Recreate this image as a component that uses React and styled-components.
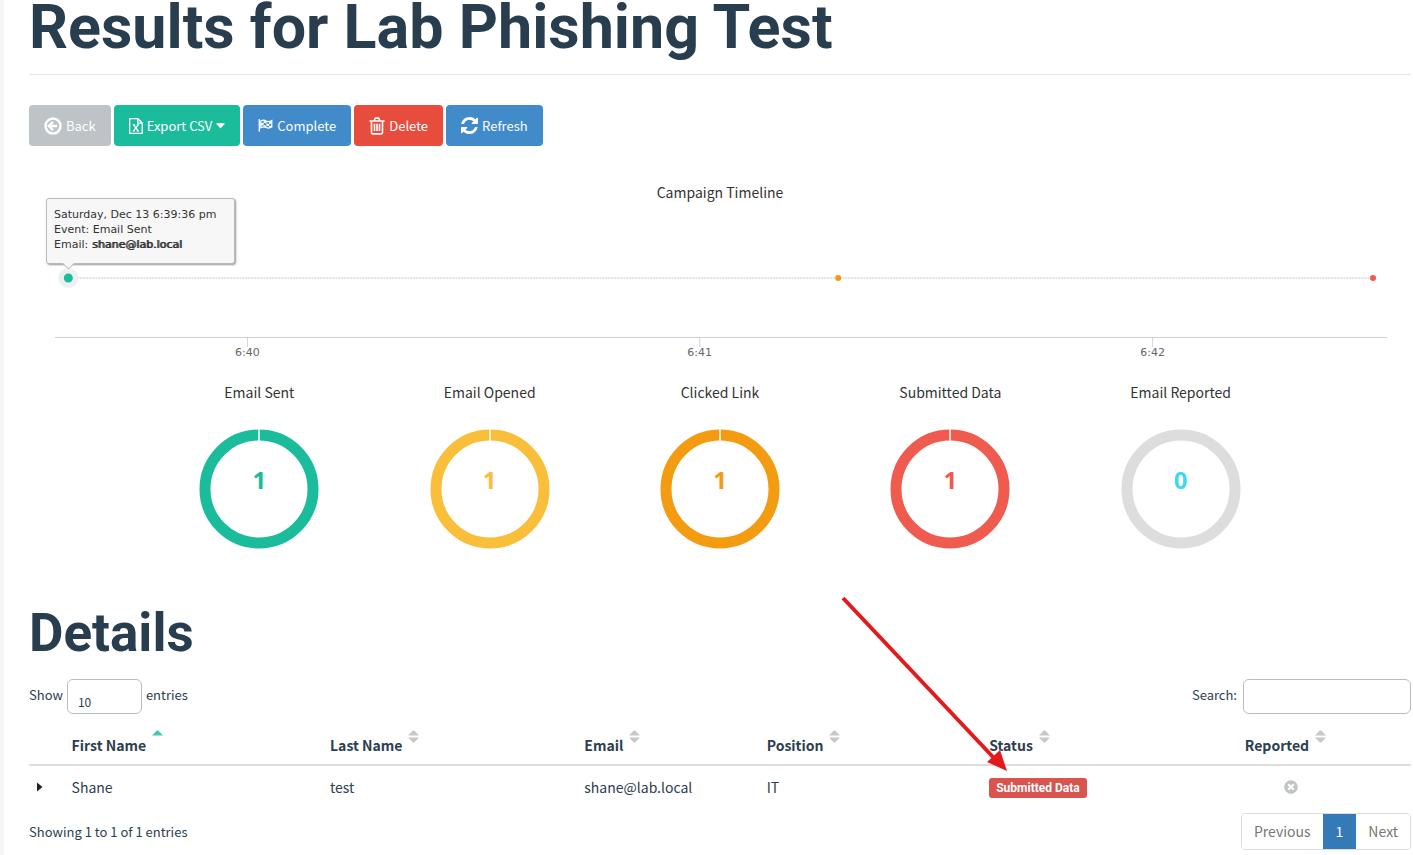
import styled, { createGlobalStyle, css } from "styled-components";
import { FaTimesCircle } from "react-icons/fa";

const GlobalStyle = createGlobalStyle`
  * {
    box-sizing: border-box;
  }
  body {
    margin: 0;
    background: #fff;
    color: #2c3e50;
    font-family: "Noto Sans CJK JP", "Open Sans", sans-serif;
    font-size: 14px;
    line-height: 20px;
  }
`;

const Page = styled.main`
  min-height: 100vh;
  border-left: 4px solid #f5f5f5;
  padding: 0 2px 4px 25px;
`;

const Title = styled.h1`
  margin: 0;
  padding-bottom: 20px;
  border-bottom: 1px solid #e6e6e6;
  color: #283e4f;
  font-family: Roboto, sans-serif;
  font-size: 61px;
  font-weight: 700;
  line-height: 54px;
`;

const Toolbar = styled.div`
  display: flex;
  gap: 3px;
  margin-top: 30px;
`;

const Button = styled.button`
  display: flex;
  align-items: center;
  gap: 4px;
  height: 41px;
  padding: 0 15px;
  border: 0;
  border-radius: 4px;
  background: ${({ $color }) => $color};
  color: #fff;
  font-family: inherit;
  font-size: 13px;
  line-height: 20px;
  white-space: nowrap;
`;

const ChartTitle = styled.h2`
  margin: 0;
  padding-bottom: 2px;
  color: #333;
  font-size: 14px;
  font-weight: 400;
  line-height: 18px;
  text-align: center;
`;

const Timeline = styled.section`
  position: relative;
  margin-top: 37px;
`;

const Plot = styled.svg`
  display: block;
  width: 100%;
  height: 160px;
  overflow: visible;
  text {
    fill: #666;
    font-family: "DejaVu Sans", sans-serif;
    font-size: 11px;
    text-anchor: middle;
  }
`;

const PlotArea = styled.div`
  padding: 0 24px 0 26px;
`;

const Tooltip = styled.div`
  position: absolute;
  top: 15px;
  left: 17px;
  width: 189px;
  height: 66px;
  padding: 8px 7px;
  border: 1px solid #b9b9b9;
  border-radius: 3px;
  background: #f7f7f7;
  box-shadow: 1px 1px 2px rgba(0, 0, 0, 0.4);
  color: #333;
  font-family: "DejaVu Sans", sans-serif;
  font-size: 11px;
  line-height: 15px;
  white-space: nowrap;
  b {
    font-weight: 400;
    text-shadow: 1px 0 #333;
  }
  svg {
    position: absolute;
    top: 100%;
    left: 15px;
    margin-top: -1px;
  }
`;

const Donuts = styled.section`
  display: grid;
  grid-template-columns: repeat(12, 1fr);
  margin-top: 20px;
`;

const Donut = styled.div`
  position: relative;
  grid-column: span 2;
  &:first-child {
    grid-column: 2 / span 2;
  }
  svg {
    display: block;
    margin: 26px auto 0;
  }
`;

const Count = styled.span`
  position: absolute;
  top: 83px;
  left: 0;
  width: 100%;
  color: ${({ $color }) => $color};
  font-family: "Open Sans", sans-serif;
  font-size: 24px;
  font-weight: 700;
  line-height: 28px;
  text-align: center;
`;

const DetailsTitle = styled.h1`
  margin: 56px 0 0;
  color: #283e4f;
  font-family: Roboto, sans-serif;
  font-size: 53px;
  font-weight: 700;
  line-height: 56px;
`;

const Controls = styled.div`
  display: flex;
  justify-content: space-between;
  margin-top: 18px;
  font-size: 13px;
`;

const Label = styled.label`
  display: flex;
  gap: ${({ $gap }) => $gap}px;
  line-height: 32px;
`;

const field = css`
  height: 35px;
  border: 1px solid #bbb;
  border-radius: 6px;
  background: #fff;
  color: #2c3e50;
  font-family: inherit;
  font-size: 12px;
`;

const Select = styled.select`
  ${field}
  width: 75px;
  padding: 10px 10px 0;
  appearance: none;
`;

const SearchInput = styled.input`
  ${field}
  width: 168px;
  padding: 6px 10px;
`;

const Table = styled.table`
  width: 100%;
  margin-top: 12px;
  border-collapse: collapse;
  table-layout: fixed;
`;

const Th = styled.th`
  width: ${({ $width }) => $width};
  height: 39px;
  padding: 0 20px 0 8px;
  border-bottom: 2px solid #ddd;
  font-weight: 700;
  text-align: ${({ $center }) => ($center ? "center" : "left")};
  white-space: nowrap;
`;

const Sortable = styled.span`
  display: inline-flex;
  gap: 6px;
  line-height: 30px;
`;

const Td = styled.td`
  height: 42px;
  padding: 0 8px;
  text-align: ${({ $center }) => ($center ? "center" : "left")};
  > svg {
    display: block;
    margin: ${({ $center }) => ($center ? "0 auto" : "0")};
  }
`;

const Status = styled.span`
  position: relative;
  display: inline-block;
  padding: 0 7px;
  border-radius: 3px;
  background: #d9534f;
  color: #fff;
  font-family: Roboto, sans-serif;
  font-size: 12px;
  font-weight: 700;
  vertical-align: middle;
`;

const Pointer = styled.svg`
  position: absolute;
  bottom: calc(100% + 6px);
  left: -149px;
`;

const Footer = styled.div`
  display: flex;
  align-items: center;
  justify-content: space-between;
  margin-top: 6px;
`;

const Info = styled.span`
  font-size: 13px;
`;

const Pagination = styled.nav`
  display: flex;
  overflow: hidden;
  border: 1px solid #ddd;
  border-radius: 4px;
`;

const PageLink = styled.a`
  margin: ${({ $active }) => ($active ? "-1px 0" : "0")};
  padding: ${({ $active }) => ($active ? "9px 13px" : "8px 12px")};
  background: ${({ $active }) => ($active ? "#337ab7" : "#fff")};
  color: ${({ $active }) => ($active ? "#fff" : "#777")};
  line-height: 19px;
  text-decoration: none;
`;

const BackIcon = () => (
  <svg width="18" height="18" viewBox="0 0 18 18" fill="none" stroke="#fff">
    <circle cx="9" cy="9" r="7.5" strokeWidth="2.5" />
    <path d="M9 4.8 4.8 9 9 13.2M5.4 9h7.8" strokeWidth="2.4" />
  </svg>
);

const ExcelIcon = () => (
  <svg width="14" height="16" viewBox="0 0 14 16" fill="none" stroke="#fff" strokeWidth="1.3">
    <path d="M.7.7h8.1l4.4 4.2v10.4H.7zM8.7.8v4.3h4.4" />
    <path d="m4.6 6.8 4.6 6M9.2 6.8l-4.6 6M3.8 6.8h2.4M7.8 6.8H10M3.8 12.8H6M7.6 12.8H10" />
  </svg>
);

const FlagIcon = () => (
  <svg width="15" height="15" viewBox="0 0 16 16" fill="none" stroke="#fff">
    <path d="M1.4 1.2v13.4" strokeWidth="1.5" />
    <path d="M3 3.3c2.4-1.6 4-1.2 5.9 0 1.9 1 3.7.5 5.8-.6v6.9c-2.2 1.3-3.9 1.5-5.8.5-1.9-1.1-3.5-1.1-5.9.3z" strokeWidth="1.3" />
    <path fill="#fff" stroke="none" d="M6 2.5 8.9 3.4v2.5L6 5zM3 5.8l3-.9v2.5l-3 .9zM8.9 5.9l3 .6v2.4l-3-.6zM11.9 4l2.8-1v2.7l-2.8.9zM6 7.4l2.9.9v2L6 9.4zM11.9 8.9l2.8-1.2v2l-2.8 1.2z" />
  </svg>
);

const TrashIcon = () => (
  <svg width="16" height="18" viewBox="0 0 16 18" fill="none" stroke="#fff" strokeWidth="1.6">
    <path d="M.4 4h15.2M5.2 4l.7-2.2q.2-.7 1-.7h2.2q.8 0 1 .7l.7 2.2M2.500 4v11.2q0 1.700 1.300 1.700h8.400q1.300 0 1.300-1.700V4M5.500 6.800v7.200M8 6.800v7.200M10.500 6.800v7.200" />
  </svg>
);

const RefreshIcon = () => (
  <svg width="17" height="17" viewBox="0 0 1536 1536" fill="#fff">
    <path d="M1511 928q0 5-1 7-64 268-268 434.500t-478 166.500q-146 0-282.500-55t-243.500-157l-129 129q-19 19-45 19t-45-19-19-45v-448q0-26 19-45t45-19h448q26 0 45 19t19 45-19 45l-137 137q71 66 161 102t187 36q134 0 250-65t186-179q11-17 53-117 8-23 30-23h192q13 0 22.500 9.500t9.500 22.500zm25-800v448q0 26-19 45t-45 19h-448q-26 0-45-19t-19-45 19-45l138-138q-148-137-349-137-134 0-250 65t-186 179q-11 17-53 117-8 23-30 23h-199q-13 0-22.500-9.500t-9.500-22.500v-7q65-268 270-434.500t480-166.500q146 0 284 55.500t245 156.500l130-129q19-19 45-19t45 19 19 45z" />
  </svg>
);

const CaretDown = () => (
  <svg width="9" height="6" viewBox="0 0 10 6" fill="#fff">
    <path d="M.6 0h8.8q.6.3.2.9L5.5 5.3q-.5.5-1 0L.4.9Q0 .3.6 0z" />
  </svg>
);

const SortIcon = ({ active }) => (
  <svg width="11" height="13" viewBox="0 0 11 13" fill={active ? "#48c9a9" : "#c8c8c8"}>
    <path d="M0 5.5 4.8.5h1.4L11 5.5z" />
    {!active && <path d="M0 7.5h11l-4.8 5H4.8z" />}
  </svg>
);

const events = [
  { x: "58.8%", color: "#f39c12" },
  { x: "98.95%", color: "#f05b4f" },
];

const ticks = [
  { x: "14.45%", label: "6:40" },
  { x: "48.4%", label: "6:41" },
  { x: "82.4%", label: "6:42" },
];

const stats = [
  { name: "Email Sent", count: 1, color: "#1abc9c" },
  { name: "Email Opened", count: 1, color: "#f9bf3b" },
  { name: "Clicked Link", count: 1, color: "#f39c12" },
  { name: "Submitted Data", count: 1, color: "#f05b4f" },
  { name: "Email Reported", count: 0, color: "#45d6ef" },
];

const columns = [
  { name: "First Name", width: "18.7%", active: true },
  { name: "Last Name", width: "18.4%" },
  { name: "Email", width: "13.2%" },
  { name: "Position", width: "16.1%" },
  { name: "Status", width: "13.8%" },
  { name: "Reported", width: "17.3%", center: true },
];

const App = () => {
  return (
    <Page>
      <GlobalStyle />
      <Title>Results for Lab Phishing Test</Title>

      <Toolbar>
        <Button $color="#bdc3c7">
          <BackIcon />
          Back
        </Button>
        <Button $color="#1abc9c">
          <ExcelIcon />
          Export CSV
          <CaretDown />
        </Button>
        <Button $color="#428bca">
          <FlagIcon />
          Complete
        </Button>
        <Button $color="#e74c3c">
          <TrashIcon />
          Delete
        </Button>
        <Button $color="#428bca">
          <RefreshIcon />
          Refresh
        </Button>
      </Toolbar>

      <Timeline>
        <ChartTitle>Campaign Timeline</ChartTitle>
        <PlotArea>
          <Plot>
            <line x1="1%" x2="98.95%" y1="75" y2="75" stroke="#e2e2e2" strokeWidth="2" strokeDasharray="2 1" />
            <line x1="0" x2="100%" y1="134.5" y2="134.5" stroke="#ccd0d8" />
            {ticks.map((tick) => (
              <g key={tick.label}>
                <line x1={tick.x} x2={tick.x} y1="135" y2="144" stroke="#ccd6eb" />
                <text x={tick.x} y="153">
                  {tick.label}
                </text>
              </g>
            ))}
            <circle cx="1%" cy="75" r="10" fill="#eef1f2" />
            <circle cx="1%" cy="75" r="4.5" fill="#1abc9c" />
            {events.map((event) => (
              <circle key={event.x} cx={event.x} cy="75" r="3" fill={event.color} />
            ))}
          </Plot>
        </PlotArea>
        <Tooltip>
          Saturday, Dec 13 6:39:36 pm
          <br />
          Event: Email Sent
          <br />
          Email: <b>shane@lab.local</b>
          <svg width="13" height="8" viewBox="0 0 13 8">
            <path d="M0 0h13v1L6.5 7 0 1z" fill="#f7f7f7" />
            <path d="m.5 1 6 6 6-6" fill="none" stroke="#aaa" />
          </svg>
        </Tooltip>
      </Timeline>

      <Donuts>
        {stats.map((stat) => (
          <Donut key={stat.name}>
            <ChartTitle>{stat.name}</ChartTitle>
            <svg width="120" height="120" viewBox="0 0 120 120">
              <circle
                cx="60"
                cy="60"
                r="54"
                fill="none"
                stroke={stat.count ? stat.color : "#ddd"}
                strokeWidth="11"
              />
              {stat.count > 0 && <path d="M60 0v12" stroke="#fff" strokeWidth="1.5" />}
            </svg>
            <Count $color={stat.color}>{stat.count}</Count>
          </Donut>
        ))}
      </Donuts>

      <DetailsTitle>Details</DetailsTitle>
      <Controls>
        <Label $gap={4}>
          Show
          <Select defaultValue="10">
            <option>10</option>
            <option>25</option>
            <option>50</option>
            <option>100</option>
          </Select>
          entries
        </Label>
        <Label $gap={6}>
          Search:
          <SearchInput type="search" />
        </Label>
      </Controls>

      <Table>
        <thead>
          <tr>
            <Th $width="34px" />
            {columns.map((col) => (
              <Th key={col.name} $width={col.width} $center={col.center}>
                <Sortable>
                  {col.name}
                  <SortIcon active={col.active} />
                </Sortable>
              </Th>
            ))}
          </tr>
        </thead>
        <tbody>
          <tr>
            <Td>
              <svg width="6" height="10" viewBox="0 0 6 10" fill="#222">
                <path d="M0 .5v9L5.5 5z" />
              </svg>
            </Td>
            <Td>Shane</Td>
            <Td>test</Td>
            <Td>shane@lab.local</Td>
            <Td>IT</Td>
            <Td>
              <Status>
                Submitted Data
                <Pointer width="170" height="178" viewBox="0 0 170 178">
                  <path d="m3 4 150 159" stroke="#e3191b" strokeWidth="4" />
                  <path d="M167 177 147 168 160 156z" fill="#e3191b" />
                </Pointer>
              </Status>
            </Td>
            <Td $center>
              <FaTimesCircle size={14} color="#c0c4c6" />
            </Td>
          </tr>
        </tbody>
      </Table>

      <Footer>
        <Info>Showing 1 to 1 of 1 entries</Info>
        <Pagination>
          <PageLink href="#">Previous</PageLink>
          <PageLink href="#" $active>
            1
          </PageLink>
          <PageLink href="#">Next</PageLink>
        </Pagination>
      </Footer>
    </Page>
  );
};

export default App;
